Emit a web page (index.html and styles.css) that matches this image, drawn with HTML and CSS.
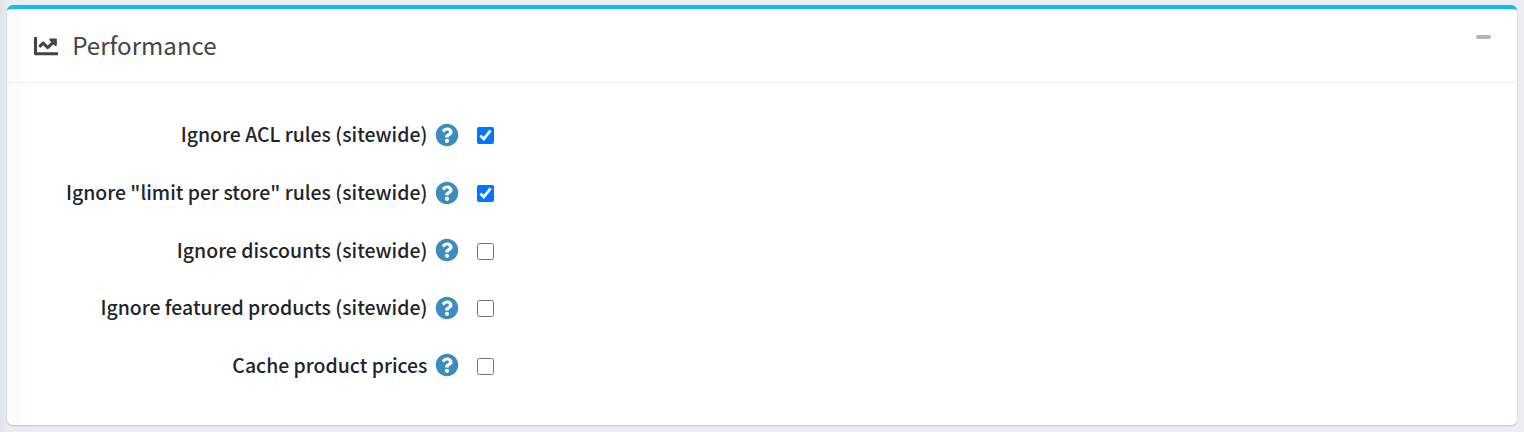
FILE: index.html
```
<!DOCTYPE html>
<html lang="en">
<head>
<meta charset="utf-8">
<title>Performance</title>
<link rel="stylesheet" href="styles.css">
</head>
<body>
<svg class="symbols" aria-hidden="true">
  <symbol id="help" viewBox="-9 -9 530 530"><path d="M504 256c0 136.997-111.043 248-248 248S8 392.997 8 256C8 119.083 119.043 8 256 8s248 111.083 248 248zM262.655 90c-54.497 0-89.255 22.957-116.549 63.758-3.536 5.286-2.353 12.415 2.715 16.258l34.699 26.31c5.205 3.947 12.621 3.008 16.665-2.122 17.864-22.658 30.113-35.797 57.303-35.797 20.429 0 45.698 13.148 45.698 32.958 0 14.976-12.363 22.667-32.534 33.976C247.128 238.528 216 254.941 216 296v4c0 6.627 5.373 12 12 12h56c6.627 0 12-5.373 12-12v-1.333c0-28.462 83.186-29.647 83.186-106.667 0-58.002-60.165-102-116.531-102zM256 338c-25.365 0-46 20.635-46 46 0 25.364 20.635 46 46 46s46-20.636 46-46c0-25.365-20.635-46-46-46z"/></symbol>
</svg>
<section class="card">
  <header class="card-header">
    <svg class="chart-icon" viewBox="0 0 512 512"><path d="M496 384H64V80c0-8.84-7.16-16-16-16H16C7.16 64 0 71.16 0 80v336c0 17.67 14.33 32 32 32h464c8.84 0 16-7.16 16-16v-32c0-8.84-7.16-16-16-16zM464 96H345.94c-21.38 0-32.09 25.85-16.97 40.97l32.4 32.4L288 242.75l-73.37-73.37c-12.5-12.5-32.76-12.5-45.25 0l-68.69 68.69c-6.25 6.25-6.25 16.38 0 22.63l22.62 22.62c6.25 6.25 16.38 6.25 22.63 0L192 237.25l73.37 73.37c12.5 12.5 32.76 12.5 45.25 0l96-96 32.4 32.4c15.12 15.12 40.97 4.41 40.97-16.97V112c.01-8.84-7.15-16-15.99-16z"/></svg>
    <h1 class="title">Performance</h1>
    <button class="collapse" aria-label="Collapse"></button>
  </header>
  <div class="card-body">
    <div class="row"><label class="label" for="acl">Ignore ACL rules (sitewide)</label><svg class="help"><use href="#help"/></svg><input class="check" id="acl" type="checkbox" checked></div>
    <div class="row"><label class="label" for="store">Ignore "limit per store" rules (sitewide)</label><svg class="help"><use href="#help"/></svg><input class="check" id="store" type="checkbox" checked></div>
    <div class="row"><label class="label" for="discounts">Ignore discounts (sitewide)</label><svg class="help"><use href="#help"/></svg><input class="check" id="discounts" type="checkbox"></div>
    <div class="row"><label class="label" for="featured">Ignore featured products (sitewide)</label><svg class="help"><use href="#help"/></svg><input class="check" id="featured" type="checkbox"></div>
    <div class="row"><label class="label" for="prices">Cache product prices</label><svg class="help"><use href="#help"/></svg><input class="check" id="prices" type="checkbox"></div>
  </div>
</section>
</body>
</html>
```
FILE: styles.css
```
* { box-sizing: border-box; }
body {
  margin: 0;
  height: 432px;
  padding: 5px 7px 7px;
  overflow: hidden;
  background: linear-gradient(90deg, #dfe2e8 0, #e9ecf1 8px, #ebeef3 30px);
  font-family: "Noto Sans CJK SC", "Noto Sans", sans-serif;
  color: #212529;
}
.symbols { display: none; }
.card {
  height: 420px;
  border-top: 4px solid #0fbcea;
  border-radius: 6px;
  background: linear-gradient(90deg, #fafafa 0, #fff 26px);
  box-shadow: 0 1px 2px rgba(0, 0, 0, .2);
}
.card-header {
  display: flex;
  align-items: center;
  height: 74px;
  padding: 0 26px 0 27px;
  border-bottom: 1px solid #f0f0f1;
  color: #444;
}
.chart-icon { width: 24.4px; height: 24.4px; margin-top: 1px; fill: #444; }
.title {
  margin: 0 auto 0 13.8px;
  padding-bottom: 2px;
  font-size: 24.1px;
  line-height: 30px;
  font-weight: 400;
}
.collapse {
  width: 15px;
  height: 4px;
  margin-bottom: 18px;
  padding: 0;
  border: 0;
  border-radius: 2px;
  background: #adb5bd;
}
.card-body { padding-top: 24.15px; }
.row { display: flex; align-items: center; height: 57.6px; }
.label {
  width: 420.4px;
  padding-bottom: 3px;
  text-align: right;
  white-space: nowrap;
  font-size: 19.46px;
  line-height: 28px;
  font-weight: 500;
}
.help { width: 24px; height: 24px; margin: 0 0 2px 7.6px; fill: #3c8dbc; }
.check { width: 17px; height: 17px; margin: 0 0 0 18px; }
```
